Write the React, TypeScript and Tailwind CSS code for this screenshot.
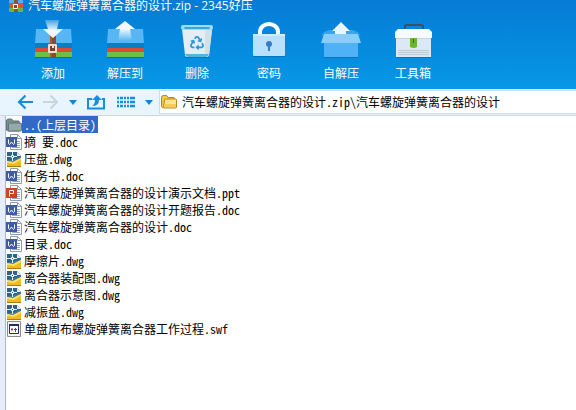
import { useState, type ReactNode } from "react";
import { FaRecycle } from "react-icons/fa";

type FileKind = "up" | "doc" | "dwg" | "ppt" | "swf";

interface FileEntry {
  name: string;
  kind: FileKind;
}

const files: FileEntry[] = [
  { name: "..(上层目录)", kind: "up" },
  { name: "摘 要.doc", kind: "doc" },
  { name: "压盘.dwg", kind: "dwg" },
  { name: "任务书.doc", kind: "doc" },
  { name: "汽车螺旋弹簧离合器的设计演示文档.ppt", kind: "ppt" },
  { name: "汽车螺旋弹簧离合器的设计开题报告.doc", kind: "doc" },
  { name: "汽车螺旋弹簧离合器的设计.doc", kind: "doc" },
  { name: "目录.doc", kind: "doc" },
  { name: "摩擦片.dwg", kind: "dwg" },
  { name: "离合器装配图.dwg", kind: "dwg" },
  { name: "离合器示意图.dwg", kind: "dwg" },
  { name: "减振盘.dwg", kind: "dwg" },
  { name: "单盘周布螺旋弹簧离合器工作过程.swf", kind: "swf" },
];

const ArchiveBase = () => (
  <>
    <path d="M2 37h37v1H2z" fill="#0671b5" />
    <path d="M3 9h35l1 15H2z" fill="#58b6f5" />
    <path d="M2 23h37v5H2z" fill="#087fc0" />
    <path d="M2 28h37v4H2z" fill="#dc4c35" />
    <path d="M2 32h37v5H2z" fill="#70bf45" />
  </>
);

const AddIcon = () => (
  <>
    <defs>
      <linearGradient id="down" x1="0" y1="0" x2="0" y2="1">
        <stop offset="0" stopColor="#fff" stopOpacity="0.25" />
        <stop offset="0.6" stopColor="#f0f9ff" />
      </linearGradient>
    </defs>
    <ArchiveBase />
    <path d="M17 14h6v23h-6z" fill="#8c4a26" />
    <path d="M17 14h2v23h-2z" fill="#a65c30" />
    <rect x="15" y="24" width="9" height="9" rx="1" fill="#f0dcd0" />
    <path d="M17 26h2v2h2v-2h1v5h-5z" fill="#7d4028" />
    <path d="M12 0h14l-2 9h6L20 18 10 9h5z" fill="url(#down)" />
  </>
);

const ExtractIcon = () => (
  <>
    <defs>
      <linearGradient id="up" x1="0" y1="0" x2="0" y2="1">
        <stop offset="0.4" stopColor="#f2faff" />
        <stop offset="1" stopColor="#d8efff" stopOpacity="0" />
      </linearGradient>
    </defs>
    <ArchiveBase />
    <path d="M20 1l10 8h-5l2 12H13l2-12h-5z" fill="url(#up)" />
  </>
);

const DeleteIcon = () => (
  <>
    <path d="M8 36q12 3 24 0v2H8z" fill="#0873bd" />
    <path d="M5 9h30l-3 26q0 2-3 2H11q-3 0-3-2z" fill="#e4edf3" />
    <path d="M28 10h7l-3 26h-4z" fill="#d3e0e8" />
    <path d="M8 34h24q-1 3-3 3H11q-2 0-3-3z" fill="#56b4dc" />
    <rect x="4" y="5" width="32" height="5" rx="2" fill="#9cdcf7" />
    <path d="M7 7h26l-1 2H8z" fill="#3ba5d8" />
    <FaRecycle x={13} y={16} size={14} color="#2997df" />
  </>
);

const PasswordIcon = () => (
  <>
    <path d="M4 36h32v1H4z" fill="#0873bd" />
    <path d="M11 15v-3a9 8 0 0 1 18 0v3" fill="none" stroke="#fff" strokeWidth="4" />
    <rect x="4" y="14" width="32" height="22" rx="1" fill="#b9e1fd" />
    <path d="M4 14h32v2H4z" fill="#d0ecff" />
    <circle cx="20" cy="24" r="3" fill="#367dc4" />
    <path d="M19 25h2v6h-2z" fill="#367dc4" />
  </>
);

const SelfExtractIcon = () => (
  <>
    <path d="M3 14L0 17q2-6 9-7h22q7 1 9 7l-3-3z" fill="#39a3ec" />
    <path d="M3 23h34v14H3z" fill="#50b2f6" />
    <path d="M3 37h34v1H3z" fill="#0873bd" />
    <path d="M20 2l9 9h-4v4H14v-4h-3z" fill="#e9f6ff" />
    <path d="M3 14h34l3 9H0z" fill="#8bcdfa" />
  </>
);

const ToolboxIcon = () => (
  <>
    <path d="M12 10V6q0-1 2-1h14q2 0 2 1v4" fill="none" stroke="#3c4f63" strokeWidth="2" />
    <path d="M3 37h35v1H3z" fill="#0873bd" />
    <path d="M3 16h35v21H3z" fill="#dce8f4" />
    <path d="M5 9h31l3 3v6H2v-6z" fill="#f8fbfe" />
    <path d="M3 18h35v1H3z" fill="#c3d6e6" />
    <path d="M17 18h7v9q-3 2-7 0z" fill="#68b52e" />
    <path d="M20 19h1v4h-1z" fill="#376c17" />
    <path d="M5 30.500h31M5 32.500h31M5 34.500h31" stroke="#b4c1cd" strokeWidth="0.800" />
  </>
);

const tools: { label: string; icon: ReactNode }[] = [
  { label: "添加", icon: <AddIcon /> },
  { label: "解压到", icon: <ExtractIcon /> },
  { label: "删除", icon: <DeleteIcon /> },
  { label: "密码", icon: <PasswordIcon /> },
  { label: "自解压", icon: <SelfExtractIcon /> },
  { label: "工具箱", icon: <ToolboxIcon /> },
];

const AppLogo = () => (
  <svg viewBox="0 0 16 16" className="size-4 shrink-0">
    <path d="M1 1h14v4H1z" fill="#4fb1ef" />
    <path d="M1 5h14v5H1z" fill="#df5233" />
    <path d="M1 10h14v4H1z" fill="#68b83c" />
    <path d="M6 1h4v13H6z" fill="#95502c" />
    <path d="M5.500 6.500h4v4h-4z" fill="#8a4527" stroke="#fff" />
  </svg>
);

const DocPage = ({ color, letter }: { color: string; letter: ReactNode }) => (
  <>
    <path d="M4.500 .5h7l4 4v11h-11z" fill="#fff" stroke="#8d9cb8" />
    <path d="M11.500 .5v4h4" fill="none" stroke="#8d9cb8" />
    <path d="M11 7.500h3M11 9.500h3M11 11.500h3M6 13.500h8" stroke="#8fa4c6" />
    <path d="M0 3h11v10H0z" fill={color} />
    {letter}
  </>
);

const FileIcon = ({ kind }: { kind: FileKind }) => (
  <svg viewBox="0 0 16 16" className="size-4 shrink-0">
    {kind === "up" && (
      <>
        <path d="M.5 13V4q0-2 2-2h3l2 2h5q1 0 1 2v8h-12z" fill="#778e8f" stroke="#5c7374" />
        <path d="M2.500 7q0-1 1-1h11q1 0 1 1v6q0 1-1 1h-12z" fill="#93a9aa" stroke="#617879" />
      </>
    )}
    {kind === "doc" && (
      <DocPage
        color="#3e5c9f"
        letter={<path d="M2.500 5.500v4l1 1L5.500 8l2 2.500 1-1v-4" fill="none" stroke="#fff" />}
      />
    )}
    {kind === "ppt" && (
      <DocPage
        color="#cd4424"
        letter={<path d="M3.500 11.500v-6h4v3h-4" fill="none" stroke="#fff" />}
      />
    )}
    {kind === "dwg" && (
      <>
        <path d="M1 1h10l4 4v11H1z" fill="#2b6488" />
        <path d="M1 9q5 1 14-4v4L1 14z" fill="#4c8bab" opacity="0.5" />
        <path d="M1 10l6 1 8-4v9H1z" fill="#edbb1d" />
        <path d="M1 10l6 1 8-4v2l-7 4-7-1z" fill="#f9e067" />
        <path d="M11 1v4h4z" fill="#e6eef2" />
        <path d="M1 5.500h4M8 5.500h3M6.500 1v3M6.500 7v3" stroke="#e3f1f8" />
        <path d="M5.500 4.500h2v2h-2z" fill="#2b6488" stroke="#fff" />
        <path d="M1 15h14v1H1z" fill="#a67c12" />
      </>
    )}
    {kind === "swf" && (
      <>
        <path d="M1.500 .5h13v15h-13z" fill="#f4f3ed" stroke="#8d8d88" />
        <path d="M3.500 3.500h9v9h-9z" fill="#fff" stroke="#202e68" />
        <path d="M3 3h10v2H3z" fill="#202e68" />
        <path d="M5 8l1-1 1 1v1l-1 1-1-1z" fill="#cf3030" />
        <path d="M9 7h1v1h1v1h-1v2H9V9H8V8h1z" fill="#2850b8" />
      </>
    )}
  </svg>
);

const FolderIcon = () => (
  <svg viewBox="0 0 18 16" className="h-4 w-[18px] shrink-0">
    <path d="M1.500 12.500v-9q0-2 2-2h3l2 2h5q1 0 1 1v9h-12z" fill="#f1ca52" stroke="#b48219" />
    <path d="M4.500 6q0-1 1-1h10q1 0 1 1v7q0 1-1 1h-12z" fill="#fbe590" stroke="#b98b22" />
    <path d="M5 10h11v3H5z" fill="#f3cd58" />
  </svg>
);

const Caret = () => (
  <svg viewBox="0 0 8 5" className="h-[5px] w-2">
    <path d="M0 0h8L4 5z" fill="#1585d2" />
  </svg>
);

const Arrow = ({ color }: { color: string }) => (
  <svg viewBox="0 0 16 16" className="size-4">
    <path d="M8.500 1.500L2 8l6.500 6.500M2 8h14" fill="none" stroke={color} strokeWidth="2.200" />
  </svg>
);

const NavBar = () => (
  <nav className="flex h-[27px] items-center border-b border-[#c9d8ee] bg-[#e9f5fe]">
    <div className="flex w-[159px] shrink-0 items-center pl-[17px]">
      <button aria-label="后退" className="mr-2.5">
        <Arrow color="#168ddd" />
      </button>
      <button aria-label="前进" className="mr-2.5 rotate-180" disabled>
        <Arrow color="#ccd5dd" />
      </button>
      <button aria-label="历史记录" className="mr-2.5">
        <Caret />
      </button>
      <button aria-label="上一级" className="mr-3">
        <svg viewBox="0 0 18 16" className="h-4 w-[18px]">
          <path d="M5 5H1v9.500h16V5h-2" fill="none" stroke="#168ddd" strokeWidth="2" />
          <path d="M5 12q3-2 3-6H5l5-5 5 5h-3q0 6-7 6z" fill="#168ddd" />
        </svg>
      </button>
      <button aria-label="查看方式" className="mr-2.5">
        <svg viewBox="0 0 18 12" className="h-3 w-[18px]">
          <path
            d="M0 2h2M3 2h3M7 2h2M10 2h2M13 2h5M0 6h2M3 6h3M7 6h2M10 6h2M13 6h5M0 10h2M3 10h3M7 10h2M10 10h2M13 10h5"
            stroke="#168ddd"
            strokeWidth="2.400"
          />
        </svg>
      </button>
      <button aria-label="选择查看方式">
        <Caret />
      </button>
    </div>
    <label className="flex h-6 min-w-0 flex-1 items-center gap-1 border border-r-0 border-[#cbdcec] bg-white">
      <FolderIcon />
      <input
        aria-label="路径"
        defaultValue="汽车螺旋弹簧离合器的设计.zip\汽车螺旋弹簧离合器的设计"
        className="min-w-0 flex-1 text-xs text-black outline-none"
      />
    </label>
  </nav>
);

export default function App() {
  const [selected, setSelected] = useState(0);

  return (
    <div className="flex min-h-screen flex-col bg-white font-['Noto_Sans_Mono_CJK_SC','Noto_Sans_CJK_SC',monospace] text-xs">
      <header className="overflow-hidden bg-linear-to-b from-[#057bd4] to-[#0798e7] pb-[7px] font-['Open_Sans','Noto_Sans_CJK_SC',sans-serif] text-white">
        <div className="flex h-3 items-center gap-1 pl-2">
          <AppLogo />
          <h1 className="whitespace-nowrap text-xs leading-3">汽车螺旋弹簧离合器的设计.zip - 2345好压</h1>
        </div>
        <div className="flex pt-2 pl-[17px]">
          {tools.map((tool) => (
            <button key={tool.label} className="flex w-[72px] flex-col items-center gap-1.5">
              <svg viewBox="0 0 40 40" className="size-10">
                {tool.icon}
              </svg>
              <span className="text-xs leading-4">{tool.label}</span>
            </button>
          ))}
        </div>
      </header>
      <NavBar />
      <main className="flex flex-1">
        <div className="w-1.5 border-r border-[#a9b8cf] bg-[#e6edfa]" />
        <ul className="flex-1">
          {files.map((file, index) => (
            <li key={file.name}>
              <button className="flex h-[17px] items-center" onClick={() => setSelected(index)}>
                <FileIcon kind={file.kind} />
                <span
                  className={`whitespace-pre pr-0.5 pl-0.5 leading-[17px] ${
                    selected === index ? "bg-[#316ac5] text-white" : "text-black"
                  }`}
                >
                  {file.name}
                </span>
              </button>
            </li>
          ))}
        </ul>
      </main>
    </div>
  );
}
